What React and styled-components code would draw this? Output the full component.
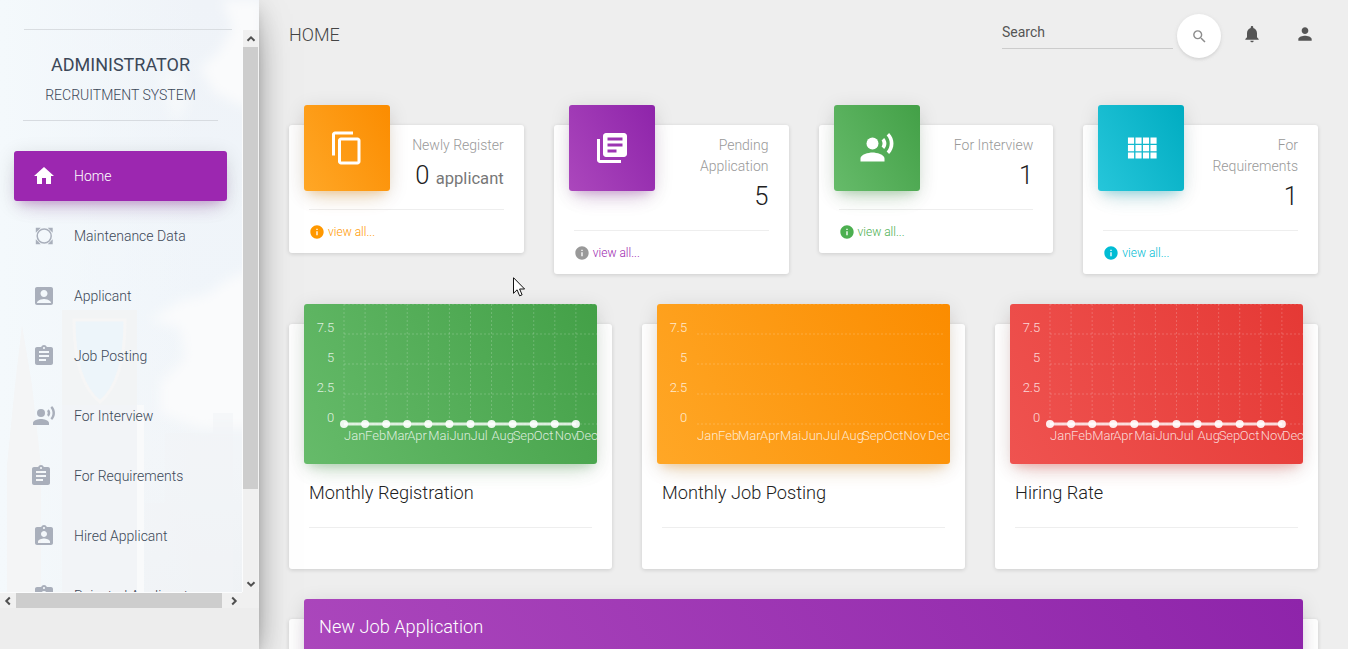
import React from "react";
import styled, { createGlobalStyle } from "styled-components";
import {
  MdHome, MdAccountBox, MdAssignment, MdRecordVoiceOver, MdAssignmentInd,
  MdContentCopy, MdLibraryBooks, MdInfo, MdSearch, MdNotifications, MdPerson,
} from "react-icons/md";

const GlobalStyle = createGlobalStyle`
  *, *::before, *::after { box-sizing: border-box; }
  body {
    margin: 0;
    overflow: hidden;
    background: #eee;
    color: #3c4858;
    font-family: Roboto, "Liberation Sans", sans-serif;
    font-size: 14px;
    font-weight: 300;
    line-height: 1.5;
  }
`;

const gradients = {
  orange: ["#ffa726", "#fb8c00", "255, 152, 0"],
  purple: ["#ab47bc", "#8e24aa", "156, 39, 176"],
  green: ["#66bb6a", "#43a047", "76, 175, 80"],
  cyan: ["#26c6da", "#00acc1", "0, 188, 212"],
  red: ["#ef5350", "#e53935", "244, 67, 54"],
};
const tints = { orange: "#ff9800", purple: "#9c27b0", green: "#4caf50", cyan: "#00bcd4", gray: "#999" };

const Page = styled.div`
  display: flex;
  height: 649px;
  overflow: hidden;
`;

/* ---------- Sidebar ---------- */

const Sidebar = styled.aside`
  position: relative;
  z-index: 2;
  flex: 0 0 259px;
  height: 100%;
  background: #ededed;
  box-shadow: 0 16px 38px -12px rgba(0, 0, 0, 0.56), 0 4px 25px 0 rgba(0, 0, 0, 0.12),
    0 8px 10px -5px rgba(0, 0, 0, 0.2);
`;

const Scenery = styled.svg`
  position: absolute;
  top: 0;
  left: 0;
`;

const SidebarInner = styled.div`
  position: relative;
  display: grid;
  grid-template-columns: 242px 17px;
  grid-template-rows: 562px 16px;
  padding-top: 30px;
`;

const TopRule = styled.div`
  position: absolute;
  top: 29px;
  left: 24px;
  width: 208px;
  height: 1px;
  background: #d9dde1;
`;

const MenuViewport = styled.div`
  overflow: hidden;
  padding: 21px 0 0 14px;
`;

const Brand = styled.div`
  width: 195px;
  height: 70px;
  margin-left: 9px;
  border-bottom: 1px solid #d7dbe0;
  text-align: center;
`;

const BrandName = styled.div`
  font-size: 18px;
  font-weight: 400;
  line-height: 27px;
`;

const BrandSub = styled.div`
  margin-top: 6px;
  font-size: 14px;
  line-height: 22px;
`;

const Menu = styled.nav`
  display: flex;
  flex-direction: column;
  gap: 10px;
  width: 213px;
  margin-top: 30px;
`;

const MenuItem = styled.a`
  display: flex;
  flex: 0 0 50px;
  align-items: center;
  padding-left: ${(p) => (p.$shifted ? 15 : 18)}px;
  gap: ${(p) => (p.$shifted ? 21 : 18)}px;
  border-radius: 3px;
  color: ${(p) => (p.$active ? "#fff" : "#3c4858")};
  background: ${(p) => (p.$active ? "#9c27b0" : "transparent")};
  box-shadow: ${(p) =>
    p.$active
      ? "0 12px 20px -10px rgba(156,39,176,.28), 0 4px 20px 0 rgba(0,0,0,.12), 0 7px 8px -5px rgba(156,39,176,.2)"
      : "none"};

  svg {
    flex: none;
    color: ${(p) => (p.$active ? "#fff" : "#a9afbb")};
  }
`;

const ScrollTrack = styled.div`
  display: flex;
  flex-direction: ${(p) => (p.$vertical ? "column" : "row")};
  background: #f0f0f0;
  border-left: ${(p) => (p.$vertical ? "1px solid #fbfcfd" : "0")};
  border-right: ${(p) => (p.$vertical ? "1px solid #f3f3f3" : "0")};
  border-top: ${(p) => (p.$vertical ? "0" : "1px solid #fbfcfd")};
`;

const ScrollArrow = styled.div`
  display: flex;
  flex: 0 0 ${(p) => p.$length || 16}px;
  align-items: center;
  justify-content: center;
`;

const ScrollThumb = styled.div`
  flex: 0 0 ${(p) => p.$length}px;
  background: #cdcdcd;
`;

const Spring = styled.div`
  flex: 1;
`;

const ScrollCorner = styled.div`
  background: #f0f0f0;
`;

/* ---------- Main ---------- */

const Main = styled.main`
  flex: 1;
  padding: 0 30px;
`;

const TopBar = styled.header`
  display: flex;
  height: 125px;
  align-items: flex-start;
`;

const PageTitle = styled.h1`
  flex: 1;
  margin: 21px 0 0;
  font-size: 18px;
  font-weight: 300;
  line-height: 27px;
  color: #444;
`;

const SearchField = styled.div`
  width: 171px;
  height: 27px;
  margin-top: 22px;
  border-bottom: 1px solid #ccc;
  font-weight: 400;
  line-height: 21px;
  color: #555;
`;

const SearchButton = styled.button`
  display: flex;
  align-items: center;
  justify-content: center;
  width: 44px;
  height: 44px;
  margin: 14px 21px 0 4px;
  padding: 0;
  border: 0;
  border-radius: 50%;
  background: #fff;
  color: #8c8c8c;
  box-shadow: 0 2px 2px 0 rgba(153, 153, 153, 0.14), 0 1px 4px 0 rgba(153, 153, 153, 0.2);
`;

const TopIcon = styled.a`
  display: flex;
  margin: ${(p) => (p.$last ? "24px 3px 0 33px" : "24px 0 0")};
  color: #555;
`;

const CardRow = styled.section`
  display: grid;
  grid-template-columns: repeat(${(p) => p.$columns}, 1fr);
  gap: 30px;
  align-items: start;
  margin-bottom: 50px;
`;

const Card = styled.article`
  min-width: 0;
  border-radius: 3px;
  background: #fff;
  box-shadow: 0 1px 4px 0 rgba(0, 0, 0, 0.14);
`;

const StatHead = styled.div`
  display: flex;
  justify-content: space-between;
  padding: 0 20px 15px 15px;
`;

const ColorPanel = styled.div`
  border-radius: 3px;
  background: linear-gradient(60deg, ${(p) => gradients[p.$tone][0]}, ${(p) => gradients[p.$tone][1]});
  box-shadow: 0 12px 20px -10px rgba(${(p) => gradients[p.$tone][2]}, 0.28),
    0 4px 20px 0 rgba(0, 0, 0, 0.12), 0 7px 8px -5px rgba(${(p) => gradients[p.$tone][2]}, 0.2);
  color: #fff;
`;

const IconPanel = styled(ColorPanel)`
  display: flex;
  flex: 0 0 86px;
  align-items: center;
  justify-content: center;
  height: 86px;
  margin-top: -20px;
`;

const StatText = styled.div`
  width: 99px;
  padding-top: 10px;
  text-align: right;
`;

const StatLabel = styled.div`
  line-height: 21px;
  color: #999;
`;

const StatValue = styled.div`
  height: 38px;
  font-size: 25.6px;
  line-height: 38px;
  color: #212121;
  white-space: nowrap;

  small {
    font-size: 16.6px;
    font-weight: 400;
    color: #777;
  }
`;

const StatFoot = styled.div`
  display: flex;
  align-items: center;
  height: 44px;
  margin: 0 20px;
  border-top: 1px solid #eee;
`;

const InfoMark = styled.span`
  display: flex;
  margin-right: 3px;
  color: ${(p) => tints[p.$tone]};
`;

const ViewLink = styled.a`
  font-size: 12px;
  line-height: 22px;
  color: ${(p) => tints[p.$tone]};
`;

const ChartPanel = styled(ColorPanel)`
  height: 160px;
  margin: -20px 15px 0;
  overflow: hidden;

  svg { display: block; }
  text {
    font-size: 13px;
    fill: rgba(255, 255, 255, 0.8);
  }
`;

const ChartCard = styled(Card)`
  height: 245px;
  padding-top: 0.02px;
`;

const ChartTitle = styled.h4`
  height: 64px;
  margin: 0 20px;
  padding-top: 15px;
  border-bottom: 1px solid #eee;
  font-size: 18.2px;
  font-weight: 300;
  line-height: 27px;
  color: #212121;
`;

const TableCard = styled(Card)`
  height: 200px;
  padding-top: 0.02px;
`;

const TableHead = styled(ColorPanel)`
  height: 80px;
  margin: -20px 15px 0;
  padding: 14px 15px;
  font-size: 18.2px;
  line-height: 27px;
`;

const Pointer = styled.svg`
  position: absolute;
  z-index: 5;
  top: 277px;
  left: 513px;
`;

/* ---------- Drawings ---------- */

const GridIcon = ({ size }) => (
  <svg width={size} height={size} viewBox="0 0 24 24" fill="currentColor">
    <path transform="translate(.3 0)" d="M3 9.100h4.100V5H3v4.100zm0 5h4.100V10H3v4.100zm5 0h4.100V10H8v4.100zm5 0h4.100V10H13v4.100zM8 9.100h4.100V5H8v4.100zM13 5v4.100h4.100V5H13zm5 9.100h4.100V10H18v4.100zM3 19h4.100v-4H3v4zm5 0h4.100v-4H8v4zm5 0h4.100v-4H13v4zm5 0h4.100v-4H18v4zm0-14v4.100h4.100V5H18z" />
  </svg>
);

const MaintenanceIcon = ({ size }) => (
  <svg width={size} height={size} viewBox="0 0 24 24">
    <circle cx="12.200" cy="12" r="7" fill="none" stroke="currentColor" strokeWidth="1.500" />
    <path fill="currentColor" d="M3.800 3.800h5L3.800 8.800zM20.700 3.800h-5l5 5zM3.800 20.300h5l-5-5zM20.700 20.300h-5l5-5z" />
  </svg>
);

const Chevron = ({ turn }) => (
  <svg width="10" height="10" viewBox="0 0 10 10">
    <path d="M1.500 6.800L5 3.300L8.500 6.800" fill="none" stroke="#505050" strokeWidth="2" transform={`rotate(${turn} 5 5)`} />
  </svg>
);

const SidebarScenery = () => (
  <Scenery width="259" height="608" viewBox="0 0 259 608">
    <defs>
      <linearGradient id="sky" x1="0" y1="0" x2="0" y2="1">
        <stop offset="0" stopColor="#eff3f8" />
        <stop offset="0.5" stopColor="#f0f5fa" />
        <stop offset="0.75" stopColor="#f2f5f8" />
        <stop offset="1" stopColor="#eff2f5" />
      </linearGradient>
      <linearGradient id="light" x1="0" y1="0" x2="1" y2="0">
        <stop offset="0" stopColor="#f4f9fc" />
        <stop offset="1" stopColor="#f4f9fc" stopOpacity="0" />
      </linearGradient>
      <filter id="soft" x="-30%" y="-30%" width="160%" height="160%"><feGaussianBlur stdDeviation="6" /></filter>
      <filter id="edge"><feGaussianBlur stdDeviation="0.7" /></filter>
    </defs>
    <rect width="259" height="608" fill="url(#sky)" />
    <rect width="200" height="608" fill="url(#light)" />
    <g fill="#fafbfc" filter="url(#soft)">
      <path d="M222 0h40v110l-22-5l-25-12l-15-25l18-15l15-25z" />
      <path d="M262 265l-35 15l-20 15l-25 5l-32 20l30 8l5 30l-25 25v30l40 15h62z" />
      <path d="M160 75l20-5l8 35l-14 18z" opacity=".6" />
    </g>
    <g filter="url(#edge)">
      <path d="M62 310h75v95H62z" fill="#f2f4f5" />
      <path d="M74 320c0 40 8 68 26 82c17-14 25-42 25-82z" fill="#edf5fa" stroke="#f6f6f6" strokeWidth="3" />
      <path d="M22 325l-7 60l-8 80v143h34V465l-9-80z" fill="#f4f5f6" />
      <path d="M62 405h75v203H62z" fill="#f2f4f7" />
      <path d="M137 405h7v203h-7z" fill="#f9fafb" />
      <path d="M145 503h20v-70h48v-20h20v195h-88z" fill="#f1f4f6" opacity="0.6" />
    </g>
  </Scenery>
);

const months = ["Jan", "Feb", "Mar", "Apr", "Mai", "Jun", "Jul", "Aug", "Sep", "Oct", "Nov", "Dec"];
const barLabelX = [40, 61, 81, 103, 123, 144.500, 166, 184.500, 205, 226.800, 246.500, 271];
const levels = [["7.5", 30], ["5", 60], ["2.5", 90], ["0", 120]];
const pointX = (i) => 40 + i * 21.08;

function Chart({ line }) {
  return (
    <svg width="293" height="160" viewBox="0 0 293 160">
      <g stroke="rgba(255,255,255,.2)" strokeDasharray="2 2">
        {[0, 30, 60, 90, 120].map((y) => (
          <line key={y} x1="40" x2={line ? 293 : 286} y1={y} y2={y} />
        ))}
        {line && months.map((m, i) => <line key={m} x1={pointX(i)} x2={pointX(i)} y1="0" y2="120" />)}
      </g>
      {levels.map(([label, y]) => (
        <text key={label} x="30.200" y={y - 2} textAnchor="end">{label}</text>
      ))}
      {months.map((m, i) => (
        <text key={m} x={line ? pointX(i) : barLabelX[i]} y="136">{m}</text>
      ))}
      {line && (
        <g>
          <line x1="40" x2={pointX(11)} y1="120" y2="120" stroke="rgba(255,255,255,.8)" strokeWidth="3" />
          {months.map((m, i) => <circle key={m} cx={pointX(i)} cy="120" r="4" fill="rgba(255,255,255,.9)" />)}
        </g>
      )}
    </svg>
  );
}

/* ---------- Data ---------- */

const menu = [
  { label: "Home", Icon: MdHome, active: true },
  { label: "Maintenance Data", Icon: MaintenanceIcon },
  { label: "Applicant", Icon: MdAccountBox },
  { label: "Job Posting", Icon: MdAssignment },
  { label: "For Interview", Icon: MdRecordVoiceOver },
  { label: "For Requirements", Icon: MdAssignment, shifted: true },
  { label: "Hired Applicant", Icon: MdAssignmentInd },
  { label: "Rejected Applicant", Icon: MdAssignmentInd },
];

const stats = [
  { label: "Newly Register", value: "0", unit: "applicant", tone: "orange", Icon: MdContentCopy },
  { label: "Pending Application", value: "5", tone: "purple", mark: "gray", Icon: MdLibraryBooks },
  { label: "For Interview", value: "1", tone: "green", Icon: MdRecordVoiceOver },
  { label: "For Requirements", value: "1", tone: "cyan", Icon: GridIcon },
];

const charts = [
  { title: "Monthly Registration", tone: "green", line: true },
  { title: "Monthly Job Posting", tone: "orange", line: false },
  { title: "Hiring Rate", tone: "red", line: true },
];

export default function App() {
  return (
    <>
      <GlobalStyle />
      <Page>
        <Sidebar>
          <SidebarScenery />
          <TopRule />
          <SidebarInner>
            <MenuViewport>
              <Brand>
                <BrandName>ADMINISTRATOR</BrandName>
                <BrandSub>RECRUITMENT SYSTEM</BrandSub>
              </Brand>
              <Menu>
                {menu.map(({ label, Icon, active, shifted }) => (
                  <MenuItem key={label} $active={active} $shifted={shifted}>
                    <Icon size={24} />
                    {label}
                  </MenuItem>
                ))}
              </Menu>
            </MenuViewport>
            <ScrollTrack $vertical>
              <ScrollArrow $length={17}><Chevron turn={0} /></ScrollArrow>
              <ScrollThumb $length={442} />
              <Spring />
              <ScrollArrow $length={17}><Chevron turn={180} /></ScrollArrow>
            </ScrollTrack>
            <ScrollTrack>
              <ScrollArrow><Chevron turn={-90} /></ScrollArrow>
              <ScrollThumb $length={206} />
              <Spring />
              <ScrollArrow><Chevron turn={90} /></ScrollArrow>
            </ScrollTrack>
            <ScrollCorner />
          </SidebarInner>
        </Sidebar>

        <Main>
          <TopBar>
            <PageTitle>HOME</PageTitle>
            <SearchField>Search</SearchField>
            <SearchButton><MdSearch size={17} /></SearchButton>
            <TopIcon><MdNotifications size={20} /></TopIcon>
            <TopIcon $last><MdPerson size={20} /></TopIcon>
          </TopBar>

          <CardRow $columns={4}>
            {stats.map(({ label, value, unit, tone, mark, Icon }) => (
              <Card key={label}>
                <StatHead>
                  <IconPanel $tone={tone}><Icon size={36} /></IconPanel>
                  <StatText>
                    <StatLabel>{label}</StatLabel>
                    <StatValue>{value} {unit && <small>{unit}</small>}</StatValue>
                  </StatText>
                </StatHead>
                <StatFoot>
                  <InfoMark $tone={mark || tone}><MdInfo size={16} /></InfoMark>
                  <ViewLink $tone={tone}>view all...</ViewLink>
                </StatFoot>
              </Card>
            ))}
          </CardRow>

          <CardRow $columns={3}>
            {charts.map(({ title, tone, line }) => (
              <ChartCard key={title}>
                <ChartPanel $tone={tone}><Chart line={line} /></ChartPanel>
                <ChartTitle>{title}</ChartTitle>
              </ChartCard>
            ))}
          </CardRow>

          <TableCard>
            <TableHead $tone="purple">New Job Application</TableHead>
          </TableCard>
        </Main>
      </Page>
      <Pointer width="13" height="20" viewBox="0 0 13 20">
        <path d="M.5.7v15.600l3.600-3.500l2.500 6l2.500-1l-2.500-5.800h5z" fill="#fff" stroke="#111" />
      </Pointer>
    </>
  );
}
